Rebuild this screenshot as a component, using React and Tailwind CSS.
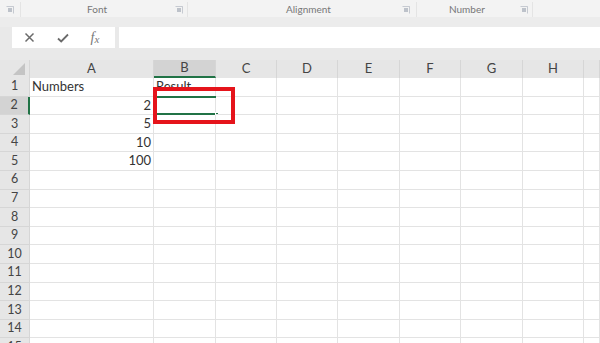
import React from "react";

const cols = ["A", "B", "C", "D", "E", "F", "G", "H", "I"];
const widths = ["w-[124px]", "w-[62px]", "w-[61px]", "w-[61px]", "w-[62px]", "w-[61px]", "w-[62px]", "w-[61px]", "flex-1"];

// cell content by row
const data = {
  1: { A: { text: "Numbers", align: "left" }, B: { text: "Result", align: "left" } },
  2: { A: { text: "2", align: "right" } },
  3: { A: { text: "5", align: "right" } },
  4: { A: { text: "10", align: "right" } },
  5: { A: { text: "100", align: "right" } },
};

const Launcher = () => (
  <svg width="8" height="8" viewBox="0 0 8 8" className="text-gray-400">
    <path d="M0.5 0.5h7v7" fill="none" stroke="currentColor" strokeWidth="1" opacity="0.5" />
    <rect x="2" y="2" width="4" height="4" fill="currentColor" opacity="0.6" />
  </svg>
);

const App = () => {
  const rows = Array.from({ length: 15 }, (_, i) => i + 1);

  return (
    <div className="w-[600px] h-[343px] overflow-hidden bg-[#e9e9e9] font-['Lato',sans-serif] text-[#333] relative">
      {/* Ribbon group labels */}
      <div className="h-[17px] bg-[#f3f3f3] flex items-center text-[10px] text-[#777] pt-[2px]">
        <div className="w-[21px] h-full border-r border-[#e4e4e4] flex items-center justify-center">
          <Launcher />
        </div>
        <div className="w-[167px] h-full flex items-center justify-between pl-[66px] pr-[4px] border-r border-[#e4e4e4]">
          <span>Font</span>
          <Launcher />
        </div>
        <div className="w-[229px] h-full flex items-center justify-between pl-[98px] pr-[6px] border-r border-[#e4e4e4]">
          <span>Alignment</span>
          <Launcher />
        </div>
        <div className="w-[116px] h-full flex items-center justify-between pl-[32px] pr-[4px] border-r border-[#e4e4e4]">
          <span>Number</span>
          <Launcher />
        </div>
        <div className="flex-1" />
      </div>

      {/* Formula bar */}
      <div className="h-[10px] bg-[#ececec]" />
      <div className="h-[21px] flex pl-[12px] gap-[4px]">
        <div className="w-[103px] bg-white flex items-center text-[#666]">
          <div className="w-[34px] flex justify-center">
            <svg width="11" height="11" viewBox="0 0 11 11">
              <path d="M1.5 1.5l8 8M9.5 1.5l-8 8" stroke="#6a6a6a" strokeWidth="1.5" fill="none" />
            </svg>
          </div>
          <div className="w-[34px] flex justify-center">
            <svg width="12" height="10" viewBox="0 0 12 10">
              <path d="M1 5.5l3.2 3L11 1.5" stroke="#6a6a6a" strokeWidth="1.8" fill="none" />
            </svg>
          </div>
          <div className="w-[30px] flex justify-center items-end font-['Liberation_Serif',serif] italic text-[14px] text-[#777] leading-none">
            f<span className="text-[11px]">x</span>
          </div>
        </div>
        <div className="flex-1 bg-white" />
      </div>
      <div className="h-[12px]" />

      {/* Grid */}
      <div className="bg-white">
        {/* Column headers */}
        <div className="flex h-[18px] bg-[#e6e6e6] text-[13px] text-[#444]">
          <div className="w-[30px] relative border-r border-[#d6d6d6]">
            <svg width="12" height="12" viewBox="0 0 12 12" className="absolute right-[4px] bottom-[3px]">
              <path d="M12 0L12 12L0 12Z" fill="#c4c4c4" />
            </svg>
          </div>
          {cols.map((c, i) => (
            <div
              key={c}
              className={`${widths[i]} flex items-center justify-center border-r border-[#d6d6d6] ${
                c === "B" ? "bg-[#d3d3d3] border-b-2 border-b-[#217346]" : ""
              }`}
            >
              {c !== "I" ? c : ""}
            </div>
          ))}
        </div>

        {/* Rows */}
        {rows.map((r) => (
          <div key={r} className="flex h-[18.6px] text-[13px]">
            <div
              className={`w-[30px] flex items-center justify-center text-[12.5px] text-[#444] border-b border-[#d6d6d6] ${
                r === 2 ? "bg-[#d3d3d3] border-r-2 border-r-[#217346]" : "bg-[#e6e6e6] border-r border-r-[#d6d6d6]"
              }`}
            >
              {r}
            </div>
            {cols.map((c, i) => {
              const cell = data[r] && data[r][c];
              const selected = r === 2 && c === "B";
              return (
                <div
                  key={c}
                  className={`${widths[i]} relative flex items-center border-r border-b border-[#e3e3e3] px-[2px] whitespace-nowrap ${
                    cell && cell.align === "right" ? "justify-end" : "justify-start"
                  }`}
                >
                  {cell ? cell.text : ""}
                  {selected && (
                    <div className="absolute left-[-1px] top-[-1px] right-[-1px] bottom-[-1px] border-t-2 border-b-2 border-[#217346]">
                      <div className="absolute right-[-3px] bottom-[-3px] w-[4px] h-[4px] bg-[#217346] border border-white" />
                    </div>
                  )}
                </div>
              );
            })}
          </div>
        ))}
      </div>

      {/* Red highlight box */}
      <div className="absolute left-[153px] top-[87px] w-[82px] h-[37px] border-4 border-[#e5141b]" />
    </div>
  );
};

export default App;
